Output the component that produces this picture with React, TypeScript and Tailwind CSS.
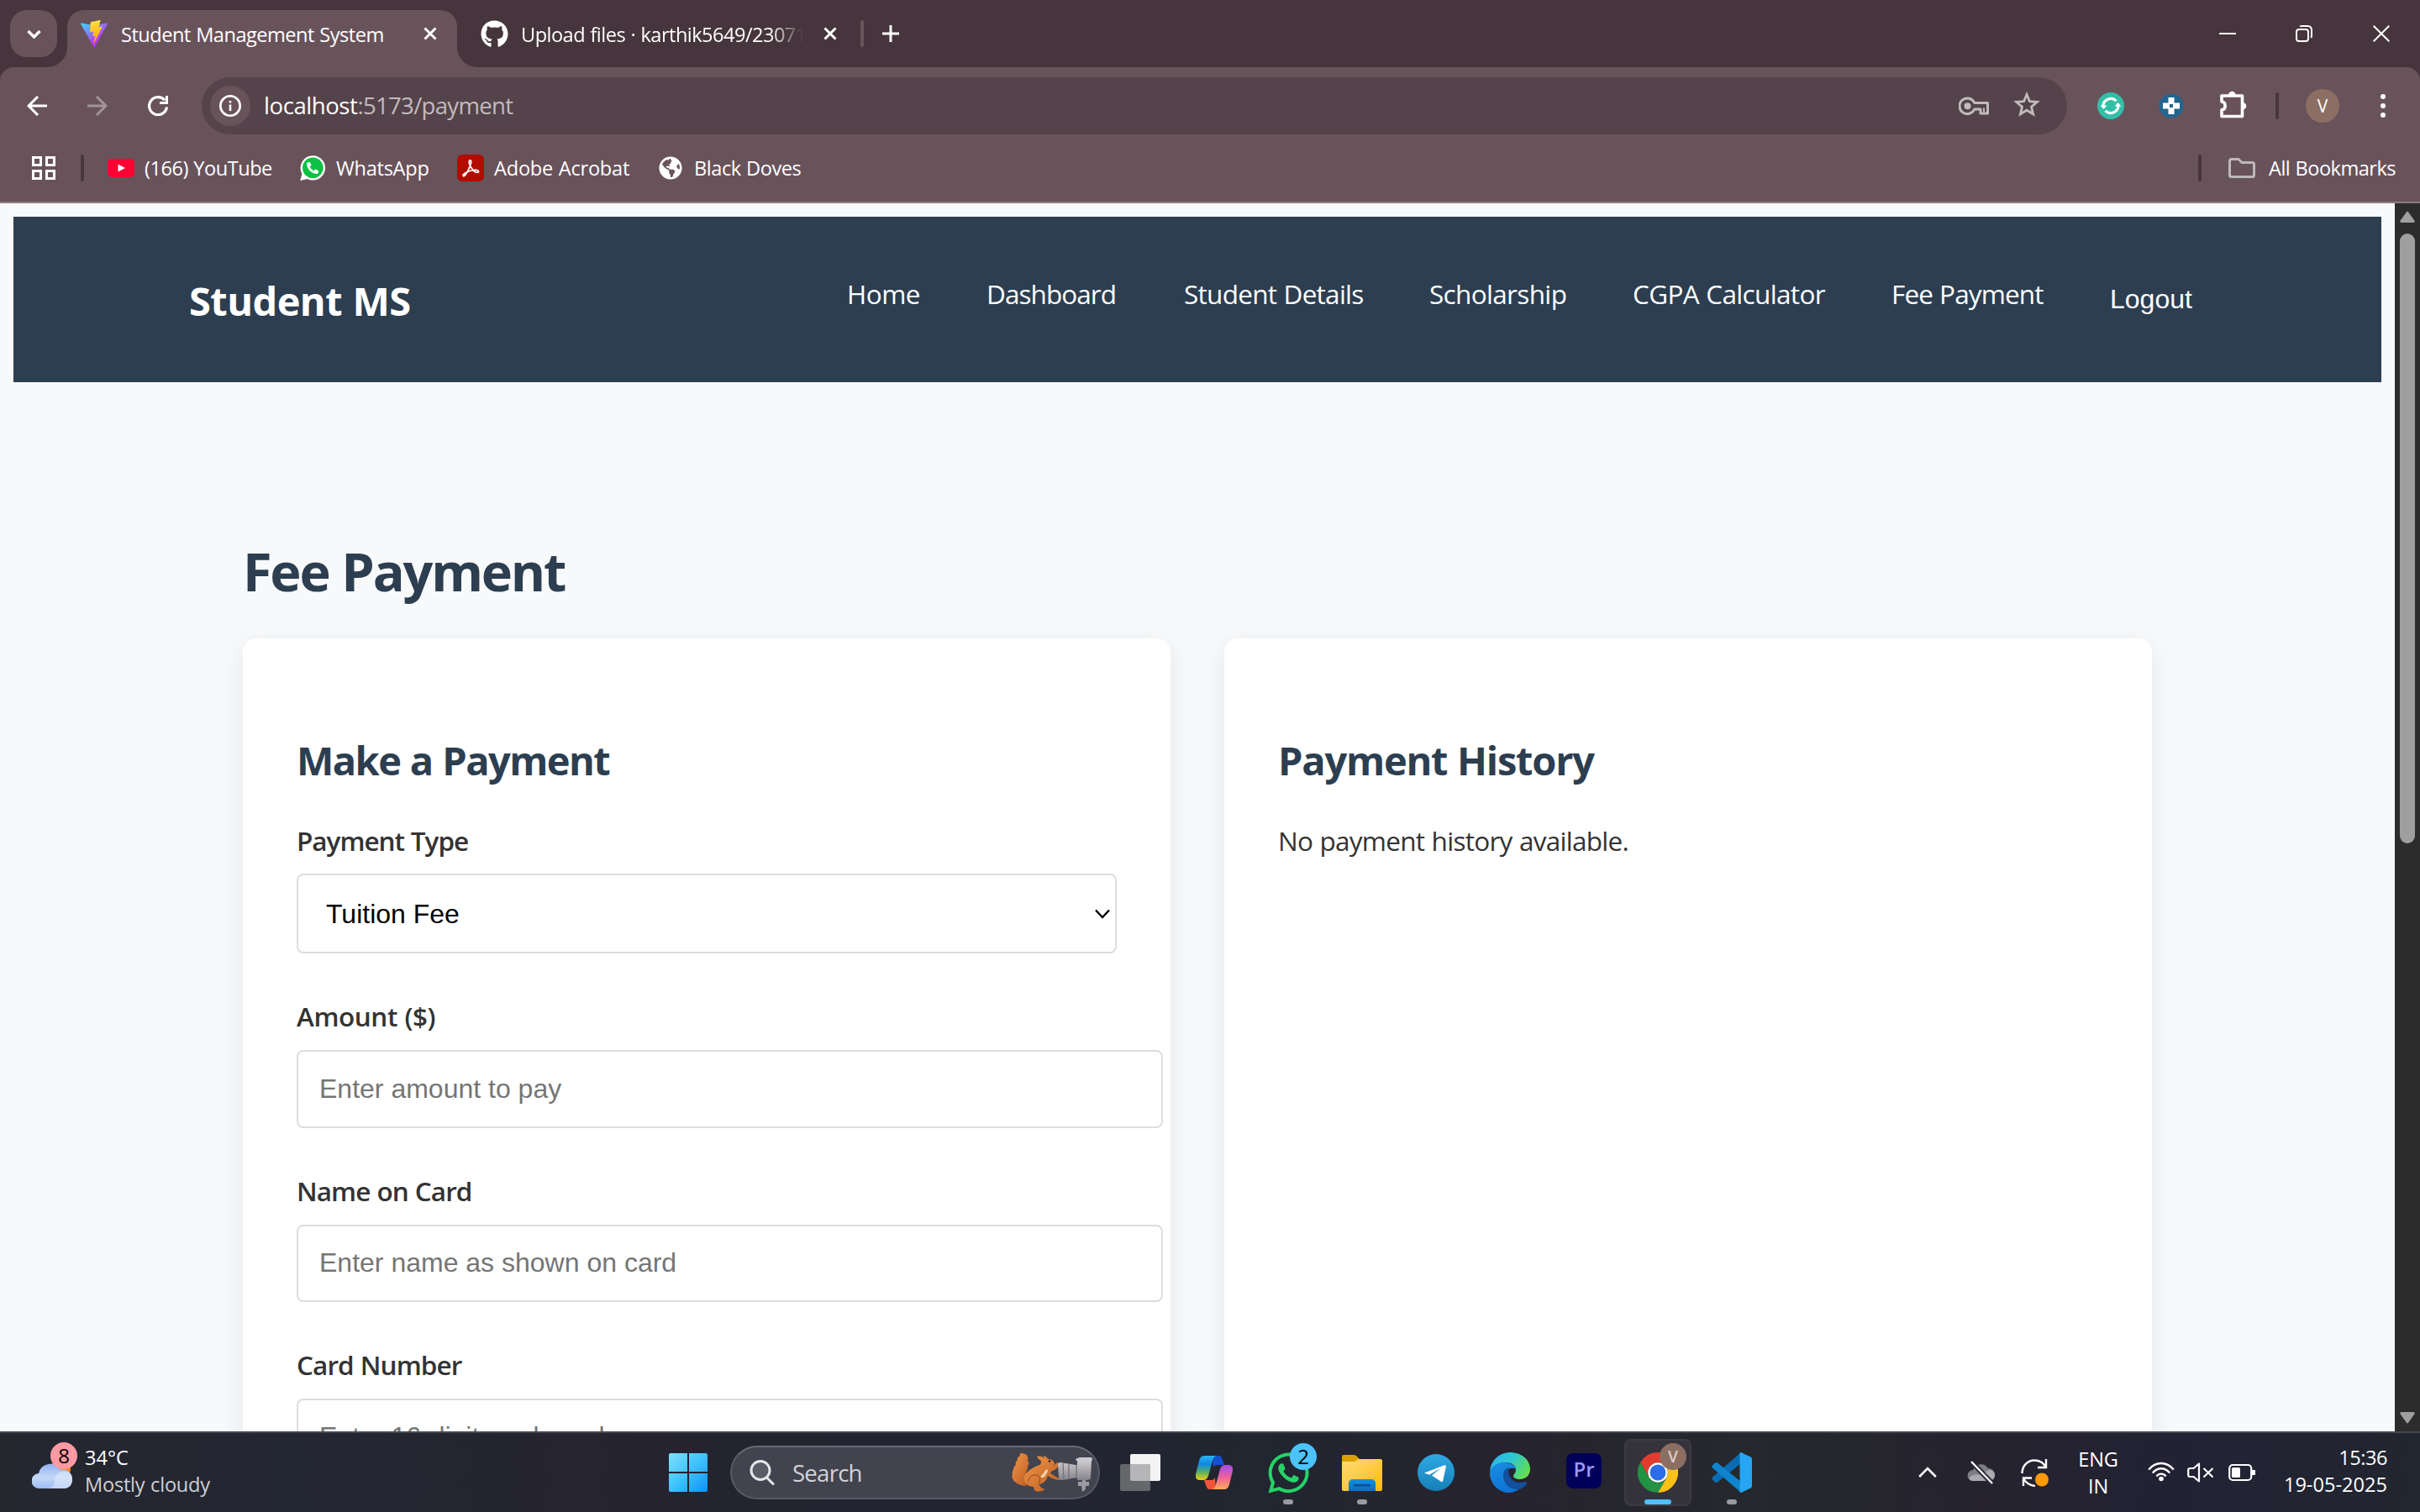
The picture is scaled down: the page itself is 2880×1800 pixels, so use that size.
import type { ReactNode } from "react";
import { FaGithub, FaGlobeAmericas, FaPhoneAlt, FaWhatsapp } from "react-icons/fa";

/* ---------- browser icons ---------- */

function ViteLogo() {
  return (
    <svg viewBox="0 0 256 257" className="size-8 shrink-0">
      <defs>
        <linearGradient id="viteA" x1="-.8%" x2="57.6%" y1="7.7%" y2="78.4%">
          <stop offset="0%" stopColor="#41D1FF" />
          <stop offset="100%" stopColor="#BD34FE" />
        </linearGradient>
        <linearGradient id="viteB" x1="43.4%" x2="50.3%" y1="2.2%" y2="89%">
          <stop offset="0%" stopColor="#FFEA83" />
          <stop offset="8.3%" stopColor="#FFDD35" />
          <stop offset="100%" stopColor="#FFA800" />
        </linearGradient>
      </defs>
      <path
        fill="url(#viteA)"
        d="M255.153 37.938L134.897 252.976c-2.483 4.44-8.862 4.466-11.382.048L.875 37.958c-2.746-4.814 1.371-10.646 6.827-9.67l120.385 21.517a6.537 6.537 0 0 0 2.322-.004l117.867-21.483c5.438-.991 9.574 4.796 6.877 9.62Z"
      />
      <path
        fill="url(#viteB)"
        d="M185.432.063L96.44 17.501a3.268 3.268 0 0 0-2.634 3.014l-5.474 92.456a3.268 3.268 0 0 0 3.997 3.378l24.777-5.718c2.318-.535 4.413 1.507 3.936 3.838l-7.361 36.047c-.495 2.426 1.782 4.5 4.151 3.78l15.304-4.649c2.372-.72 4.652 1.36 4.15 3.788l-11.698 56.621c-.732 3.542 3.979 5.473 5.943 2.437l1.313-2.028l72.516-144.72c1.215-2.423-.88-5.186-3.54-4.672l-25.505 4.922c-2.396.462-4.435-1.77-3.759-4.114l16.646-57.705c.677-2.35-1.37-4.583-3.769-4.113Z"
      />
    </svg>
  );
}

function Stroke({ d, className, w = 3, box = "0 0 24 24" }: { d: string; className: string; w?: number; box?: string }) {
  return (
    <svg viewBox={box} className={className} fill="none" stroke="currentColor" strokeWidth={w}>
      <path d={d} />
    </svg>
  );
}

function TabStrip() {
  return (
    <div className="flex h-20 bg-[#46353c] pl-3 pt-3">
      <div className="relative z-10 flex size-14 shrink-0 items-center justify-center rounded-[20px] bg-[#69535b]">
        <Stroke d="M1.5 2l7 7 7-7" w={3.4} box="0 0 17 11" className="mt-px h-[11px] w-[17px]" />
      </div>
      <div className="relative ml-3 h-[68px] w-[464px] shrink-0 rounded-t-[20px] bg-[#69535b]">
        <div className="absolute -left-6 bottom-0 size-6 bg-[#69535b]">
          <div className="size-6 rounded-br-[24px] bg-[#46353c]" />
        </div>
        <div className="absolute -right-6 bottom-0 size-6 bg-[#69535b]">
          <div className="size-6 rounded-bl-[24px] bg-[#46353c]" />
        </div>
        <div className="flex h-14 items-center pl-4">
          <ViteLogo />
          <span className="ml-4 mt-[2px] w-[360px] whitespace-nowrap text-[23.6px] leading-[48px] tracking-[-0.022em]">
            Student Management System
          </span>
          <Stroke d="M1.5 1.5l13 13M14.5 1.5l-13 13" w={3} box="0 0 16 16" className="size-4" />
        </div>
      </div>
      <div className="flex h-14 items-center pl-7">
        <FaGithub className="size-[33px] shrink-0" />
        <span className="ml-[15px] mt-[2px] w-[336px] overflow-hidden whitespace-nowrap text-[23.6px] leading-[48px] tracking-[-0.023em] [mask-image:linear-gradient(90deg,#000_88%,transparent_100%)]">
          Upload files · karthik5649/23071
        </span>
        <Stroke d="M1.5 1.5l13 13M14.5 1.5l-13 13" w={3} box="0 0 16 16" className="ml-6 size-4" />
        <div className="ml-[28px] h-8 w-[4px] rounded bg-[#69535b]" />
        <Stroke d="M10 0v20M0 10h20" w={3} box="0 0 20 20" className="ml-[22px] size-5" />
      </div>
      <div className="ml-auto flex h-14 items-center pr-9">
        <Stroke d="M0 10h20" w={2} box="0 0 20 20" className="size-5" />
        <svg viewBox="0 0 20 20" className="ml-[71px] size-5" fill="none" stroke="currentColor" strokeWidth="2">
          <rect x="1" y="5" width="14" height="14" rx="3" />
          <path d="M5 1.4C6 1 7 1 8 1h6c3 0 5 2 5 5v6c0 1 0 2-.6 3" />
        </svg>
        <Stroke d="M.7.7l18.6 18.6M19.3.7L.7 19.3" w={2} box="0 0 20 20" className="ml-[72px] size-5" />
      </div>
    </div>
  );
}

function Toolbar() {
  return (
    <div className="bg-[#46353c]">
      <div className="flex h-20 items-center rounded-t-[16px] bg-[#69535b] pl-8 pr-[41px] pt-3">
        <Stroke d="M24 12H2.5M13 1L2 12l11 11" w={3} className="size-6" />
        <Stroke d="M0 12h21.5M11 1l11 11-11 11" w={3} className="ml-12 size-6 text-[#a2949a]" />
        <Stroke d="M22.5 13.5A10.5 10.5 0 1 1 20 5.2M22.5 0v8.5H14" w={3.2} className="ml-12 size-6" />
        <div className="ml-10 flex h-[68px] w-[2220px] items-center rounded-full bg-[#54434a] pl-[10px]">
          <div className="flex size-12 items-center justify-center rounded-full bg-[#69535b]">
            <svg viewBox="0 0 26 26" className="size-[26px]" fill="none" stroke="currentColor" strokeWidth="2.6">
              <circle cx="13" cy="13" r="11.7" />
              <path d="M13 11.5V19M13 7v2.6" />
            </svg>
          </div>
          <span className="-mt-[2px] ml-4 whitespace-nowrap text-[27.6px] leading-[48px]">
            <span className="tracking-[-0.017em]">localhost</span>
            <span className="tracking-[-0.026em] text-[#c3babe]">:5173/payment</span>
          </span>
          <svg viewBox="0 0 36 22" className="ml-auto h-[22px] w-9 text-[#c0bbbd]" fill="none" stroke="currentColor" strokeWidth="3">
            <path d="M18.8 7.5A9.3 9.3 0 1 0 18.8 15H26v5h8.5V7.500z" strokeLinejoin="round" />
            <path d="M30 13.500v5" strokeWidth="2" />
            <circle cx="10.500" cy="11.200" r="4" fill="currentColor" stroke="none" />
          </svg>
          <svg viewBox="0 0 32 32" className="-mt-1 ml-[29px] mr-[32px] size-8 text-[#c0bbbd]" fill="none" stroke="currentColor" strokeWidth="2.8">
            <path d="M16 4.500l3.400 8.200 8.900.7-6.800 5.800 2.100 8.600L16 23.200l-7.600 4.600 2.100-8.600-6.800-5.800 8.900-.7z" />
          </svg>
        </div>
        <svg viewBox="0 0 32 32" className="ml-9 size-8">
          <circle cx="16" cy="16" r="16" fill="#32bfa8" />
          <g fill="none" stroke="#fff" strokeWidth="3">
            <path d="M7 17a9 9 0 0 1 15.500-6.700" />
            <path d="M25 15a9 9 0 0 1-15.500 6.700" />
          </g>
          <path fill="#fff" d="M3.500 15.500h8L7.500 20zM20.500 16.500h8L24.500 12z" />
        </svg>
        <svg viewBox="0 0 30 30" className="ml-[41px] size-[30px]">
          <circle cx="15" cy="15" r="14.500" fill="#22658f" />
          <path fill="#fff" d="M11.500 5h7v6.500H25v7h-6.500V25h-7v-6.500H5v-7h6.500z" />
          <rect x="13" y="13" width="4" height="4" fill="#22658f" />
        </svg>
        <svg viewBox="0 0 34 34" className="-mt-[5px] ml-[41px] h-[34px] w-[34px]">
          <path
            d="M4 7h24.500v24.500H4v-7.600c5.500-.7 5.500-9.200 0-9.900z"
            fill="none"
            stroke="#fff"
            strokeWidth="3.600"
            strokeLinejoin="round"
          />
          <path fill="#fff" d="M12 6a4.300 4.300 0 0 1 8.600 0zM29 15a4.300 4.300 0 0 1 0 8.600z" />
        </svg>
        <div className="ml-[34px] h-8 w-1 rounded bg-[#46353c]" />
        <div className="ml-8 flex size-10 items-center justify-center rounded-full bg-[#8d6e63] text-[21px] leading-none">V</div>
        <svg viewBox="0 0 6 28" className="ml-[49px] h-7 w-[6px]" fill="#fff">
          <circle cx="3" cy="3" r="3" />
          <circle cx="3" cy="14" r="3" />
          <circle cx="3" cy="25" r="3" />
        </svg>
      </div>
    </div>
  );
}

function Bookmark({ icon, label, className }: { icon: ReactNode; label: string; className: string }) {
  return (
    <div className="flex items-center">
      <div className="flex w-8 justify-center">{icon}</div>
      <span className={`-mt-px ml-3 whitespace-nowrap text-[23.6px] leading-[48px] ${className}`}>{label}</span>
    </div>
  );
}

function BookmarksBar() {
  return (
    <div className="flex h-[82px] items-center border-b-2 border-[#8b7a80] bg-[#69535b] pl-[38px] pr-[28px]">
      <svg viewBox="0 0 28 28" className="size-7" fill="none" stroke="#fff" strokeWidth="3">
        <rect x="1.500" y="1.500" width="9" height="9" />
        <rect x="17.500" y="1.500" width="9" height="9" />
        <rect x="1.500" y="17.500" width="9" height="9" />
        <rect x="17.500" y="17.500" width="9" height="9" />
      </svg>
      <div className="ml-[30px] h-8 w-1 rounded bg-[#46353c]" />
      <div className="ml-7 w-[228px]">
        <Bookmark
          label="(166) YouTube"
          className="tracking-[-0.021em]"
          icon={
            <svg viewBox="0 0 32 22" className="h-[22px] w-8">
              <rect width="32" height="22" rx="5" fill="#ff0033" />
              <path d="M12.500 6.500l8.500 4.500-8.500 4.500z" fill="#fff" />
            </svg>
          }
        />
      </div>
      <div className="w-[188px]">
        <Bookmark
          label="WhatsApp"
          className="tracking-[-0.012em]"
          icon={
            <svg viewBox="0 0 30 30" className="size-[30px]">
              <path d="M15.300.2a14.700 14.700 0 1 1-6.600 27.800L.3 30l2.100-8A14.700 14.700 0 0 1 15.300.2z" fill="#fff" />
              <circle cx="15.300" cy="14.800" r="12.300" fill="#0cc143" />
              <FaPhoneAlt x={8} y={8} width={14} height={14} size={14} color="#fff" />
            </svg>
          }
        />
      </div>
      <div className="w-[238px]">
        <Bookmark
          label="Adobe Acrobat"
          className="tracking-[-0.01em]"
          icon={
            <svg viewBox="0 0 32 32" className="size-8">
              <rect width="32" height="32" rx="6" fill="#b30b00" />
              <path
                d="M15.500 7c-2.200 0-1.200 4.400.8 7.800 2 3.300 5 6.600 7.600 6.600 2.900 0 2-3.100-1.700-3.100-4.500 0-9 1.400-12.600 3.600-3.700 2.300-2.700 4.500-1 3.300C11 23.600 15 16 16.400 10.500 17 8 16.500 7 15.500 7z"
                fill="none"
                stroke="#fff"
                strokeWidth="1.800"
              />
            </svg>
          }
        />
      </div>
      <Bookmark label="Black Doves" className="tracking-[-0.02em]" icon={<FaGlobeAmericas className="size-7" />} />
      <div className="ml-auto h-8 w-1 rounded bg-[#46353c]" />
      <svg viewBox="0 0 32 24" className="ml-8 h-6 w-8" fill="none" stroke="#bdb9bb" strokeWidth="3">
        <path d="M1.500 3.500a2 2 0 0 1 2-2H12l4 4h12.500a2 2 0 0 1 2 2v13a2 2 0 0 1-2 2h-25a2 2 0 0 1-2-2z" strokeLinejoin="round" />
      </svg>
      <span className="-mt-px ml-4 w-[152px] whitespace-nowrap text-[23.6px] leading-[48px] tracking-[-0.023em]">All Bookmarks</span>
    </div>
  );
}

/* ---------- page ---------- */

function SiteHeader() {
  return (
    <header className="flex h-[197px] bg-[#2c3e50] pl-[209px] text-white">
      <div className="w-[783px] pt-[64px] text-[47px] font-bold leading-[72px] tracking-[-0.012em]">Student MS</div>
      <nav className="grid grid-cols-[166px_235px_292px_242px_308px_261px_100px] items-start whitespace-nowrap pt-[68px] text-[31.500px] leading-[48px]">
        <a className="tracking-[-0.016em]">Home</a>
        <a className="tracking-[-0.03em]">Dashboard</a>
        <a className="tracking-[-0.023em]">Student Details</a>
        <a className="tracking-[-0.021em]">Scholarship</a>
        <a className="tracking-[-0.021em]">CGPA Calculator</a>
        <a className="tracking-[-0.028em]">Fee Payment</a>
        <a className="-ml-px pt-[6px] font-['Liberation_Sans',sans-serif] text-[32px]">Logout</a>
      </nav>
    </header>
  );
}

function Field({ label, placeholder, track, tall }: { label: string; placeholder: string; track: string; tall?: boolean }) {
  return (
    <div className="mt-[51px] w-[1031px]">
      <label className={`block whitespace-nowrap text-[31.500px] font-semibold leading-[48px] ${track}`}>{label}</label>
      <div
        className={`mt-4 flex items-center rounded-lg border-2 border-[#ddd] bg-white pb-[2px] pl-[25px] font-['Liberation_Sans',sans-serif] text-[32px] leading-[48px] text-[#757575] [word-spacing:0] ${
          tall ? "h-[93px]" : "h-[92px]"
        }`}
      >
        {placeholder}
      </div>
    </div>
  );
}

function PaymentPage() {
  return (
    <div className="flex h-[1462px] overflow-hidden bg-[#f8f9fb] text-[#333]">
      <div className="w-[2850px] px-4 pt-4">
        <SiteHeader />
        <main className="pl-[273px] pt-[177px]">
          <h1 className="whitespace-nowrap text-[63px] font-bold leading-[96px] tracking-[-0.035em] text-[#2c3e50]">Fee Payment</h1>
          <div className="mt-[32px] grid grid-cols-[1104px_1104px] gap-16">
            <section className="h-[1400px] rounded-2xl bg-white pl-16 pt-[109px] shadow-[0_8px_30px_rgba(0,0,0,0.08)]">
              <h2 className="whitespace-nowrap text-[47px] font-bold leading-[72px] tracking-[-0.033em] text-[#2c3e50]">Make a Payment</h2>
              <label className="mt-[36px] block whitespace-nowrap text-[31.500px] font-semibold leading-[48px] tracking-[-0.033em]">
                Payment Type
              </label>
              <div className="mt-[15px] flex h-[95px] w-[976px] items-center justify-between rounded-lg border-2 border-[#ddd] bg-white pl-[33px] pr-[5px] font-['Liberation_Sans',sans-serif] text-[32px] leading-[48px] text-black [word-spacing:0]">
                Tuition Fee
                <Stroke d="M2 1.500L10 10l8-8.500" w={2.400} box="0 0 20 12" className="h-3 w-5" />
              </div>
              <Field label="Amount ($)" placeholder="Enter amount to pay" track="tracking-[-0.014em]" tall />
              <Field label="Name on Card" placeholder="Enter name as shown on card" track="tracking-[-0.03em]" />
              <Field label="Card Number" placeholder="Enter 16-digit card number" track="tracking-[-0.029em]" />
            </section>
            <section className="h-[1400px] rounded-2xl bg-white pl-16 pt-[109px] shadow-[0_8px_30px_rgba(0,0,0,0.08)]">
              <h2 className="whitespace-nowrap text-[47px] font-bold leading-[72px] tracking-[-0.026em] text-[#2c3e50]">Payment History</h2>
              <p className="mt-[36px] whitespace-nowrap text-[31.500px] leading-[48px] tracking-[-0.023em]">No payment history available.</p>
            </section>
          </div>
        </main>
      </div>
      <div className="flex w-[30px] flex-col items-center bg-[#2c2c2c] pb-[9px] pt-[9px]">
        <svg viewBox="0 0 18 14" className="h-[14px] w-[18px]" fill="#9f9f9f">
          <path d="M8 1.200a1.200 1.200 0 0 1 2 0l7.500 10.500c.6 1-.2 2.300-1.200 2.300H1.700C.7 14-.1 12.700.5 11.700z" />
        </svg>
        <div className="mt-[13px] h-[726px] w-[18px] rounded-full bg-[#9f9f9f]" />
        <svg viewBox="0 0 18 14" className="mt-auto h-[14px] w-[18px] rotate-180" fill="#9f9f9f">
          <path d="M8 1.200a1.200 1.200 0 0 1 2 0l7.500 10.500c.6 1-.2 2.300-1.200 2.300H1.700C.7 14-.1 12.700.5 11.700z" />
        </svg>
      </div>
    </div>
  );
}

/* ---------- taskbar ---------- */

function Weather() {
  return (
    <div className="flex w-[779px] items-center pl-[38px]">
      <div className="relative h-12 w-12">
        <svg viewBox="0 0 48 48" className="size-12">
          <defs>
            <linearGradient id="cloud" x1="0" y1="0" x2="0" y2="1">
              <stop offset="0" stopColor="#8fb2f2" />
              <stop offset=".55" stopColor="#c6d8f6" />
              <stop offset="1" stopColor="#9dbdf5" />
            </linearGradient>
          </defs>
          <circle cx="34" cy="20" r="12" fill="#f58a1f" />
          <path d="M9 43a9 9 0 0 1-1-18 14 14 0 0 1 26-4 11 11 0 0 1 14 11c0 7-4 11-10 11z" fill="url(#cloud)" />
          <path d="M27 35c0-8 6-13 12-12.500C45 23 48 27 48 32c0 7-4 11-10 11H20c4-1 7-4 7-8z" fill="#e4edfb" opacity=".55" />
        </svg>
        <div className="absolute -top-[12px] left-[22px] flex size-8 items-center justify-center rounded-full bg-[#ff99a4] text-[24px] leading-none text-black">
          8
        </div>
      </div>
      <div className="-mt-1 ml-[15px] whitespace-nowrap text-[23.6px] leading-8">
        <div>34°C</div>
        <div className="tracking-[-0.01em] text-[#cfd0d3]">Mostly cloudy</div>
      </div>
    </div>
  );
}

function StartLogo() {
  return (
    <svg viewBox="0 0 46 46" className="h-[46px] w-[46px]">
      <defs>
        <linearGradient id="win" x1="0" y1="0" x2="46" y2="46" gradientUnits="userSpaceOnUse">
          <stop offset="0" stopColor="#7fe0ff" />
          <stop offset=".5" stopColor="#3fc2fb" />
          <stop offset="1" stopColor="#0a93f8" />
        </linearGradient>
      </defs>
      <path fill="url(#win)" d="M2 0h20v22H0V2a2 2 0 0 1 2-2zM24 0h20a2 2 0 0 1 2 2v20H24zM0 24h22v22H2a2 2 0 0 1-2-2zM24 24h22v20a2 2 0 0 1-2 2H24z" />
    </svg>
  );
}

function SquirrelArt() {
  return (
    <svg viewBox="0 0 96 46" className="h-[46px] w-24">
      <defs>
        <linearGradient id="fur" x1="0" y1="0" x2="1" y2="1">
          <stop offset="0" stopColor="#f0964a" />
          <stop offset="1" stopColor="#bd5d1f" />
        </linearGradient>
        <linearGradient id="lens" x1="0" y1="0" x2="0" y2="1">
          <stop offset="0" stopColor="#d8d6da" />
          <stop offset=".5" stopColor="#b1aeb2" />
          <stop offset="1" stopColor="#85838a" />
        </linearGradient>
      </defs>
      <path
        fill="url(#fur)"
        d="M11 0c3 0 7 1 8 4 1 2 0 3 0 5 2 2 2 4 0 6 1 3-1 5-2 8-1 4-1 8 1 10-1 3-1 5 0 6-7 0-13-3-16-7-2-3-2-5-1-7-1-3 1-4 1-6 0-2 2-4 3-6-1-2 1-4 2-5-1-2 1-4 3-5-1-1 0-2 1-3z"
      />
      <path
        fill="url(#fur)"
        d="M30 4c3-1 7 0 9 2l-1-3c2 0 4 2 5 4 4 0 7 2 8 5 0 2-2 4-5 4 3 0 5-2 8-5l2 1c0 4-3 8-8 9l-2 3 10 6c2 1 1 2-1 2-5-1-9-3-12-5-1 4-3 7-7 9-2 1-3 1-4 1l4 5c3 0 4 1 2 2-4 2-9 2-11 0l-1-4c-6 0-11-4-11-10 0-7 8-12 18-16 2-1 2-3 2-5-2-1-4-3-5-5z"
      />
      <path fill="#f3cfae" d="M41 19c-2 3-3 5-6 8-2 2 2 3 4 1 2-3 4-5 4-8z" />
      <path fill="none" stroke="#8f4617" strokeWidth="1" d="M20 34c0-6 5-9 10-8 4 1 5 6 2 10" />
      <circle cx="45" cy="9.500" r="1.300" fill="#2a1608" />
      <path fill="url(#lens)" d="M55 13c0-1 1-2 3-2l18 3h2V8c0-2 2-3 6-3h10c2 0 2 2 1 5l-1 19c0 2-2 3-5 3H78v-3l-18 3c-3 0-4 0-4-3z" />
      <path stroke="#6f6d74" strokeWidth="1.200" fill="none" d="M61 12l1 19M68 13v17M77 14v14" />
      <ellipse cx="86" cy="7.500" rx="10" ry="2.600" fill="#c9cad0" />
      <path fill="#9b9aa1" d="M79 34h13v5H79zM84 32h4v2h-4zM83 39h5v4l-4 3z" />
    </svg>
  );
}

function TaskViewIcon() {
  return (
    <svg viewBox="0 0 48 44" className="h-11 w-12">
      <rect x="12" y="0" width="36" height="32" rx="2" fill="#f3f3f4" />
      <rect x="0" y="12" width="36" height="32" rx="2" fill="#66676a" />
      <path d="M12 12h24v20H14a2 2 0 0 1-2-2z" fill="#b5b5b7" />
    </svg>
  );
}

function CopilotIcon() {
  return (
    <svg viewBox="0 0 44 40" className="h-10 w-11">
      <defs>
        <linearGradient id="cpA" x1="0" y1="0" x2="0" y2="1">
          <stop offset="0" stopColor="#2bb4f2" />
          <stop offset=".35" stopColor="#0f86e0" />
          <stop offset=".65" stopColor="#4faf6b" />
          <stop offset="1" stopColor="#f5cc0b" />
        </linearGradient>
        <linearGradient id="cpB" x1="0" y1="0" x2="0" y2="1">
          <stop offset="0" stopColor="#a24cf0" />
          <stop offset=".5" stopColor="#f0609a" />
          <stop offset="1" stopColor="#fda957" />
        </linearGradient>
      </defs>
      <path d="M20 0h7c3 0 4 2 5 5l2 6h-8c-3 0-4 1-5 3z" fill="#1550d0" />
      <path d="M24 40h-7c-3 0-4-2-5-5l-2-6h8c3 0 4-1 5-3z" fill="#f2543a" />
      <path d="M10 0h15c-3 0-4 3-5 6l-5 18c-1 3-3 5-6 5H5c-4 0-6-3-5-7L4 6c1-4 3-6 6-6z" fill="url(#cpA)" />
      <path d="M34 40H19c3 0 4-3 5-6l5-18c1-3 3-5 6-5h4c4 0 6 3 5 7l-4 16c-1 4-3 6-6 6z" fill="url(#cpB)" />
    </svg>
  );
}

function ExplorerIcon() {
  return (
    <svg viewBox="0 0 48 43" className="h-[43px] w-12">
      <defs>
        <linearGradient id="fold" x1="0" y1="0" x2="1" y2="1">
          <stop offset="0" stopColor="#ffdc74" />
          <stop offset="1" stopColor="#fdb913" />
        </linearGradient>
        <linearGradient id="foldB" x1="0" y1="0" x2="0" y2="1">
          <stop offset="0" stopColor="#1391e0" />
          <stop offset="1" stopColor="#0a6cc4" />
        </linearGradient>
      </defs>
      <path d="M0 2a2 2 0 0 1 2-2h12c2 0 3 1 4 2l3 3v10H0z" fill="#dd9f03" />
      <path d="M0 8h15c2 0 3-3 5-3h26a2 2 0 0 1 2 2v34a2 2 0 0 1-2 2H2a2 2 0 0 1-2-2z" fill="url(#fold)" />
      <path d="M8 43V34c0-3 2-5 5-5h22c3 0 5 2 5 5v9z" fill="url(#foldB)" />
      <rect x="14" y="35" width="20" height="2.500" rx="1" fill="#0b4f93" />
    </svg>
  );
}

function TelegramIcon() {
  return (
    <svg viewBox="0 0 44 44" className="size-[44px]">
      <defs>
        <linearGradient id="tg" x1="0" y1="0" x2="0" y2="1">
          <stop offset="0" stopColor="#2fa9e4" />
          <stop offset="1" stopColor="#1580b8" />
        </linearGradient>
      </defs>
      <circle cx="22" cy="22" r="22" fill="url(#tg)" />
      <path d="M8 22.500L32 13.300c1.200-.4 2.100.3 1.800 2l-3.600 16.600c-.3 1.300-1.300 1.500-2.300.9L17 25.500 28 16.500 14 24.800z" fill="#fff" />
    </svg>
  );
}

function EdgeIcon() {
  return (
    <svg viewBox="0 0 48 48" className="size-12">
      <defs>
        <linearGradient id="edA" x1="0" y1=".2" x2="1" y2=".6">
          <stop offset="0" stopColor="#2cb5f0" />
          <stop offset=".5" stopColor="#2fc6cf" />
          <stop offset="1" stopColor="#63e04c" />
        </linearGradient>
        <linearGradient id="edB" x1="0" y1="0" x2=".4" y2="1">
          <stop offset="0" stopColor="#1a8ee0" />
          <stop offset="1" stopColor="#0d74d6" />
        </linearGradient>
      </defs>
      <path d="M0 23C1 9 12 0 24 0c14 0 24 9 24 20 0 7-5 12-12 12-5 0-8-2-8-4s3-3 3-7c0-5-5-9-11-9C10 12 2 17 0 23z" fill="url(#edA)" />
      <path d="M0 24C1 17 8 12 17 12c7 0 13 3 14 8-4-3-12-1-12 7 0 10 10 16 19 14-4 4-9 7-15 7C10 48 0 37 0 24z" fill="url(#edB)" />
      <path d="M16 27c0-5 3-8 7-9-2 4 0 17 12 18 4 0 6-1 8-1 2 1 1 3-1 5-2 2-5 4-9 4-10 0-17-7-17-17z" fill="#124f9c" />
    </svg>
  );
}

function ChromeIcon() {
  return (
    <svg viewBox="0 0 48 48" className="size-12">
      <path d="M24 12h20.800A24 24 0 0 0 3.200 12l10.400 18A12 12 0 0 1 24 12z" fill="#e33b2e" />
      <path d="M44.800 12H24a12 12 0 0 1 10.400 18L24 48a24 24 0 0 0 20.800-36z" fill="#fbc116" />
      <path d="M34.400 30a12 12 0 0 1-20.800 0L3.200 12A24 24 0 0 0 24 48z" fill="#229342" />
      <circle cx="24" cy="24" r="11.800" fill="#fff" />
      <circle cx="24" cy="24" r="9.400" fill="#2b6de8" />
    </svg>
  );
}

function VsCodeIcon() {
  return (
    <svg viewBox="0 0 48 48" className="size-12">
      <path d="M35 0v13L7 35.500c-1 .8-2 .8-3 0l-3-3c-1-1-1-2 0-3z" fill="#0a6db4" />
      <path d="M35 48V35L7 12.500c-1-.8-2-.8-3 0l-3 3c-1 1-1 2 0 3z" fill="#0f83cd" />
      <path d="M35 0l11 5.300c1.300.7 2 1.800 2 3v31.400c0 1.200-.7 2.300-2 3L35 48c-1 .3-1.500-.5-1.500-1V1c0-.6.500-1.300 1.500-1z" fill="#25a5f2" />
    </svg>
  );
}

function Cell({ children, running }: { children: ReactNode; running?: boolean }) {
  return (
    <div className="relative flex h-20 w-20 shrink-0 items-center justify-center">
      {children}
      {running && <div className="absolute bottom-[2px] left-[34px] h-[6px] w-3 rounded-full bg-[#9a9ba0]" />}
    </div>
  );
}

function Tray() {
  return (
    <div className="flex items-center pr-[39px]">
      <Stroke d="M1.200 12L11 2l9.800 10" w={2.600} box="0 0 22 14" className="h-[14px] w-[22px]" />
      <svg viewBox="0 0 34 28" className="ml-[36px] h-7 w-[34px]">
        <path d="M7 24a6.500 6.500 0 0 1 0-13 10 10 0 0 1 18-2 8 8 0 0 1 8 8c0 4-3 7-7 7z" fill="#7d7d85" />
        <path d="M2 21c3-4 9-6 14-4l8-5c5-3 9 1 9 5s-3 7-7 7H7c-2 0-4-1-5-3z" fill="#a9a9ae" />
        <path d="M5 1l25 26" stroke="#25232f" strokeWidth="6" />
        <path d="M5 1l25 26" stroke="#fff" strokeWidth="2.400" />
      </svg>
      <svg viewBox="0 0 34 34" className="ml-[30px] size-[34px]" fill="none" stroke="#fff" strokeWidth="2.400">
        <path d="M1.500 18C1.500 9 8 2.500 16 2.500c6 0 11 3 13.500 8M30 1v10H20M17 33c-6-.500-11-3.500-14-9M3 33V23.500h10" />
        <circle cx="25" cy="25.500" r="8" fill="#ff9a05" stroke="none" />
      </svg>
      <div className="ml-[33px] w-[50px] text-center text-[23.6px] leading-8 tracking-[-0.01em]">
        <div>ENG</div>
        <div>IN</div>
      </div>
      <svg viewBox="0 0 32 24" className="-mt-[2px] ml-[34px] h-6 w-8" fill="none" stroke="#fff" strokeWidth="2.400">
        <path d="M1.200 9.500C9.500-.500 22.500-.500 30.800 9.500M5.800 13.500c5.700-7 14.700-7 20.400 0M10.500 17.500c3-3.800 8-3.800 11 0" />
        <circle cx="16" cy="20.500" r="2.800" fill="#fff" stroke="none" />
      </svg>
      <svg viewBox="0 0 32 24" className="ml-[15px] h-6 w-8" fill="none" stroke="#fff" strokeWidth="2.200">
        <path d="M14 1.500v21L7.500 17H3.500C2 17 1.200 16 1.200 15V9c0-1.200.8-2 2.300-2h4z" strokeLinejoin="round" />
        <path d="M19.500 7l11 10.500M30.500 7l-11 10.500" />
      </svg>
      <svg viewBox="0 0 32 22" className="ml-[17px] h-[22px] w-8" fill="none" stroke="#fff" strokeWidth="2.200">
        <rect x="1.200" y="2" width="26" height="18" rx="4" />
        <rect x="4" y="5" width="10" height="12" rx="1.500" fill="#fff" stroke="none" />
        <path d="M30 8v6" strokeWidth="4" />
      </svg>
      <div className="-mt-1 ml-[33px] w-[124px] whitespace-nowrap text-right text-[23.6px] leading-8">
        <div className="tracking-[-0.02em]">15:36</div>
        <div>19-05-2025</div>
      </div>
    </div>
  );
}

function Taskbar() {
  return (
    <div className="flex h-24 items-center border-t-2 border-[#45474f] bg-[linear-gradient(90deg,#24272e_0%,#232633_12%,#25242f_24%,#222432_42%,#212630_52%,#26232e_62%,#25282c_72%,#26232f_82%,#222234_90%,#222630_100%)] text-white">
      <Weather />
      <Cell>
        <StartLogo />
      </Cell>
      <div className="ml-[10px] mr-2 flex h-16 w-[440px] shrink-0 items-center rounded-full border-2 border-[#575963] border-t-[#686a73] bg-[#41434f] pl-[21px] pr-[7px]">
        <svg viewBox="0 0 30 30" className="size-[30px]" fill="none" stroke="#e6e7ea" strokeWidth="3">
          <circle cx="13" cy="12.500" r="11" fill="#5a5c66" />
          <path d="M20.500 21l7.500 7.500" strokeLinecap="round" />
        </svg>
        <span className="ml-[21px] text-[27.6px] leading-[40px] tracking-[-0.028em] text-[#d2d3d7]">Search</span>
        <div className="ml-auto">
          <SquirrelArt />
        </div>
      </div>
      <div className="flex gap-2">
        <Cell>
          <TaskViewIcon />
        </Cell>
        <Cell>
          <CopilotIcon />
        </Cell>
        <Cell running>
          <FaWhatsapp className="size-[55px] shrink-0 text-[#25d366]" />
          <div className="absolute left-[42px] top-[5px] flex size-8 items-center justify-center rounded-full bg-[#4cc2ff] text-[24px] leading-none text-black">
            2
          </div>
        </Cell>
        <Cell running>
          <ExplorerIcon />
        </Cell>
        <Cell>
          <TelegramIcon />
        </Cell>
        <Cell>
          <EdgeIcon />
        </Cell>
        <Cell>
          <div className="-mt-[5px] flex h-[42px] w-[42px] items-center justify-center rounded-lg bg-[#00005b] pb-[3px] text-[24px] font-semibold leading-none text-[#9999ff]">
            Pr
          </div>
        </Cell>
        <div className="relative flex h-20 w-20 items-center justify-center rounded-lg border-2 border-[#3c3b44] bg-[#34333c]">
          <ChromeIcon />
          <div className="absolute left-[40px] top-[3px] flex size-8 items-center justify-center rounded-full bg-[#8d6e63] text-[19px] font-semibold leading-none text-[#d9cdc8]">
            V
          </div>
          <div className="absolute bottom-0 left-[22px] h-[6px] w-8 rounded-full bg-[#4cc2ff]" />
        </div>
        <Cell running>
          <VsCodeIcon />
        </Cell>
      </div>
      <div className="ml-auto">
        <Tray />
      </div>
    </div>
  );
}

export default function App() {
  return (
    <div className="h-[1800px] w-[2880px] overflow-hidden font-['Open_Sans','Noto_Sans',sans-serif] text-white [word-spacing:0.05em]">
      <TabStrip />
      <Toolbar />
      <BookmarksBar />
      <PaymentPage />
      <Taskbar />
    </div>
  );
}
